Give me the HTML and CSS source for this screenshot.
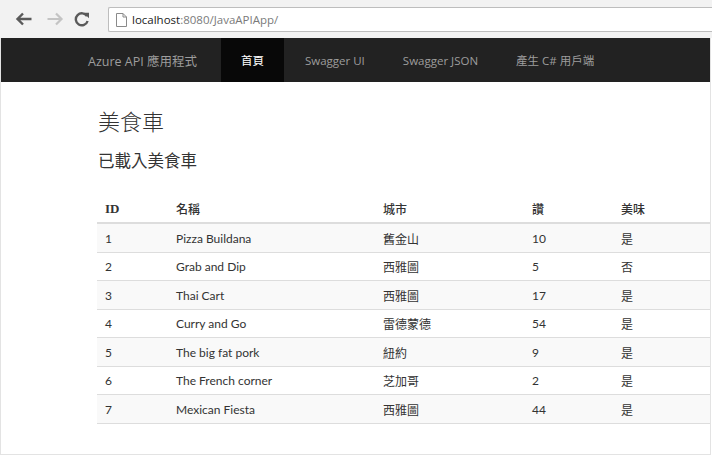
FILE: index.html
```html
<!DOCTYPE html>
<html lang="zh-Hant">
<head>
<meta charset="utf-8">
<title>美食車</title>
<link rel="stylesheet" href="styles.css">
</head>
<body>
<div class="chrome">
  <div class="nav-buttons">
    <svg class="btn back" width="18" height="14" viewBox="0 0 18 14"><path d="M8 1.5 L2.5 7 L8 12.5 M2.5 7 H16.5" fill="none" stroke="#5a5a5a" stroke-width="2.4" stroke-linejoin="miter"/></svg>
    <svg class="btn fwd" width="18" height="14" viewBox="0 0 18 14"><path d="M10 1.5 L15.5 7 L10 12.5 M15.5 7 H1.5" fill="none" stroke="#c4c4c4" stroke-width="2.2"/></svg>
    <svg class="btn reload" width="16" height="16" viewBox="0 0 16 16"><path d="M13 5.2 A6 6 0 1 0 13.6 10" fill="none" stroke="#5a5a5a" stroke-width="2.4"/><path d="M9.5 1.8 L15 1.8 L15 7.3 Z" fill="#5a5a5a"/></svg>
  </div>
  <div class="omnibox">
    <svg class="page-icon" width="11" height="14" viewBox="0 0 11 14"><path d="M0.5 0.5 H7 L10.5 4 V13.5 H0.5 Z M7 0.5 V4 H10.5" fill="#fff" stroke="#8a8a8a" stroke-width="1"/></svg>
    <span class="host">localhost</span><span class="path">:8080/JavaAPIApp/</span>
  </div>
</div>
<div class="viewport">
  <nav class="navbar">
    <a class="brand" href="#">Azure API 應用程式</a>
    <ul class="nav">
      <li class="active"><a href="#">首頁</a></li>
      <li><a href="#">Swagger UI</a></li>
      <li><a href="#">Swagger JSON</a></li>
      <li><a href="#">產生 C# 用戶端</a></li>
    </ul>
  </nav>
  <main class="container">
    <h1>美食車</h1>
    <h3>已載入美食車</h3>
    <table class="table">
      <thead>
        <tr><th class="c-id">ID</th><th class="c-name">名稱</th><th class="c-city">城市</th><th class="c-likes">讚</th><th class="c-good">美味</th></tr>
      </thead>
      <tbody>
        <tr><td>1</td><td>Pizza Buildana</td><td>舊金山</td><td>10</td><td>是</td></tr>
        <tr><td>2</td><td>Grab and Dip</td><td>西雅圖</td><td>5</td><td>否</td></tr>
        <tr><td>3</td><td>Thai Cart</td><td>西雅圖</td><td>17</td><td>是</td></tr>
        <tr><td>4</td><td>Curry and Go</td><td>雷德蒙德</td><td>54</td><td>是</td></tr>
        <tr><td>5</td><td>The big fat pork</td><td>紐約</td><td>9</td><td>是</td></tr>
        <tr><td>6</td><td>The French corner</td><td>芝加哥</td><td>2</td><td>是</td></tr>
        <tr><td>7</td><td>Mexican Fiesta</td><td>西雅圖</td><td>44</td><td>是</td></tr>
      </tbody>
    </table>
  </main>
</div>
</body>
</html>
```

FILE: styles.css
```css
html, body {
  margin: 0;
  padding: 0;
  background: #fff;
}
body {
  width: 712px;
  height: 455px;
  overflow: hidden;
  font-family: "Lato", "Noto Sans CJK TC", sans-serif;
  color: #333;
}
.chrome {
  height: 38px;
  background: #f2f2f2;
  display: flex;
  align-items: flex-start;
  box-sizing: border-box;
}
.nav-buttons {
  display: flex;
  align-items: center;
  height: 38px;
  padding-left: 15px;
  width: 108px;
  box-sizing: border-box;
}
.btn { display: block; }
.back { margin-right: 13px; }
.fwd { margin-right: 10px; }
.omnibox {
  margin-top: 7px;
  height: 25px;
  flex: 1;
  background: #fff;
  border: 1px solid #bdbdbd;
  border-right: none;
  border-radius: 2px 0 0 2px;
  box-sizing: border-box;
  display: flex;
  align-items: center;
  padding-left: 7px;
  font-family: "Open Sans", "Noto Sans", sans-serif;
  font-size: 11.5px;
}
.page-icon { margin-right: 5px; }
.host { color: #222; }
.path { color: #7a7a7a; }

.viewport {
  height: 417px;
  border: 1px solid #e3e3e3;
  border-top: none;
  box-sizing: border-box;
  overflow: hidden;
  width: 711px;
}
.navbar {
  height: 44px;
  background: #222;
  display: flex;
  align-items: stretch;
  margin: 0 -1px;
  font-family: "Open Sans", "Noto Sans CJK TC", sans-serif;
  font-size: 11.5px;
}
.brand {
  color: #9d9d9d;
  text-decoration: none;
  display: flex;
  align-items: center;
  padding-left: 88px;
  width: 221px;
  box-sizing: border-box;
  font-size: 12.5px;
}
.nav {
  list-style: none;
  margin: 0;
  padding: 0;
  display: flex;
}
.nav li { display: flex; }
.nav a {
  color: #9d9d9d;
  text-decoration: none;
  display: flex;
  align-items: center;
  padding: 0 19px;
}
.nav li.active a { padding: 0 20px 0 20px; }
.nav li.active + li a { padding-left: 21px; }
.nav li.active { background: #080808; }
.nav li.active a { color: #fff; }

.container {
  padding-left: 96px;
}
h1 {
  margin: 23px 0 0 1px;
  font-family: "Noto Sans CJK TC", sans-serif;
  font-weight: 300;
  font-size: 22px;
  line-height: 30px;
  color: #333;
}
h3 {
  margin: 13px 0 0 1px;
  font-family: "Noto Sans CJK TC", sans-serif;
  font-weight: 400;
  font-size: 16.5px;
  line-height: 24px;
  color: #333;
}
.table {
  margin-top: 23px;
  border-collapse: collapse;
  width: 720px;
  table-layout: fixed;
  font-size: 12px;
}
.c-id { width: 55px; }
.c-name { width: 191px; }
.c-city { width: 133px; }
.c-likes { width: 73px; }
.table th {
  text-align: left;
  font-weight: 500;
  font-family: "Noto Sans CJK TC", sans-serif;
  font-size: 12px;
  height: 27px;
  padding: 0 8px;
  border-bottom: 2px solid #ddd;
}
.table th.c-id { font-family: "Liberation Serif", serif; font-size: 13px; font-weight: 700; }
.table td {
  height: 28px;
  padding: 0 8px;
  border-bottom: 1px solid #ddd;
  font-family: "Lato", "Noto Sans CJK TC", sans-serif;
}
.table tbody tr:nth-child(even) td { height: 27px; }
.table tbody tr:nth-child(odd) { background: #f9f9f9; }
```
